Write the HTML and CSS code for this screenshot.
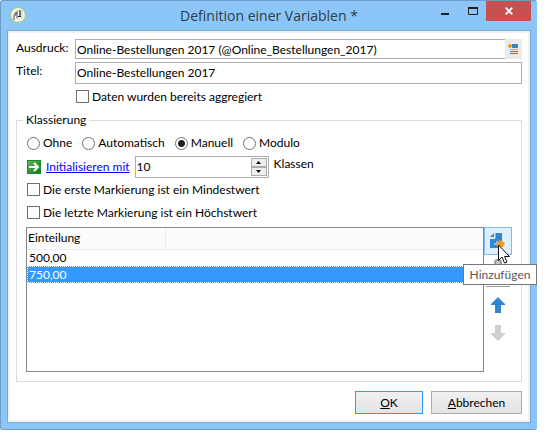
FILE: index.html
```html
<!DOCTYPE html>
<html lang="de">
<head>
<meta charset="utf-8">
<title>Definition einer Variablen</title>
<link rel="stylesheet" href="styles.css">
</head>
<body>
<main class="window">
  <header class="titlebar">
    <svg class="app-icon" viewBox="0 0 16 16" aria-hidden="true">
      <circle cx="8" cy="8" r="7.4" fill="#f7f7f5" stroke="#a5cf55"/>
      <path d="M3 13V8l2-3 3-2v9l-2-1v-3l-1 1v4z" fill="#a0a0a0"/>
      <path d="M5 7l2-2v2l-2 2z" fill="#666"/>
      <path d="M10 3v6M8 9.500h3" stroke="#222" stroke-width="1.200" fill="none"/>
      <path d="M12 4v8" stroke="#c4c4c4" stroke-width="1"/>
    </svg>
    <h1 class="title">Definition einer Variablen *</h1>
    <div class="window-buttons">
      <button class="win-btn" type="button" aria-label="Minimieren"><svg width="10" height="8" viewBox="0 0 10 8"><path d="M1 7h8" stroke="#1e1e1e" stroke-width="2"/></svg></button>
      <button class="win-btn" type="button" aria-label="Maximieren"><svg width="10" height="8" viewBox="0 0 10 8"><path d="M.5 1v6.500h9V1" stroke="#1e1e1e" fill="none"/><path d="M0 1h10" stroke="#1e1e1e" stroke-width="2"/></svg></button>
      <button class="win-btn close" type="button" aria-label="Schließen"><svg width="8" height="8" viewBox="0 0 8 8"><path d="M.7.7l6.600 6.600M7.300.7L.7 7.300" stroke="#fff" stroke-width="1.800"/></svg></button>
    </div>
  </header>
  <form class="client">
    <div class="fields">
      <label for="expr">Ausdruck:</label>
      <div class="combo">
        <input class="text" id="expr" type="text" value="Online-Bestellungen 2017 (@Online_Bestellungen_2017)">
        <button class="combo-btn" type="button" aria-label="Ausdruck bearbeiten">
          <svg width="11" height="10" viewBox="0 0 11 10"><path d="M4 0h6v4H4z" fill="#2f86d3"/><path d="M2 5.500h8" stroke="#8bb9e3"/><path d="M2 7.500h8M2 9.500h8" stroke="#2f86d3"/><path d="M0 2h4M2 0v4" stroke="#f39a1d" stroke-width="2" fill="none"/></svg>
        </button>
      </div>
      <label for="ttl">Titel:</label>
      <input class="text tall" id="ttl" type="text" value="Online-Bestellungen 2017">
      <label class="option aggregated"><input type="checkbox">Daten wurden bereits aggregiert</label>
    </div>
    <fieldset class="group">
      <legend>Klassierung</legend>
      <div class="radios">
        <label class="option"><input type="radio" name="mode">Ohne</label>
        <label class="option"><input type="radio" name="mode">Automatisch</label>
        <label class="option"><input type="radio" name="mode" checked>Manuell</label>
        <label class="option"><input type="radio" name="mode">Modulo</label>
      </div>
      <div class="init">
        <svg width="14" height="14" viewBox="0 0 14 14" aria-hidden="true"><defs><linearGradient id="g" x2="1" y2="1"><stop stop-color="#62b562"/><stop offset="1" stop-color="#087b15"/></linearGradient></defs><rect x=".5" y=".5" width="13" height="13" fill="url(#g)" stroke="#238629"/><path d="M2 7h9M7 3l4 4-4 4" stroke="#fff" stroke-width="2" fill="none"/></svg>
        <a href="#classes">Initialisieren mit</a>
        <div class="spin">
          <input id="classes" type="text" value="10">
          <div class="spin-btns">
            <button type="button" aria-label="Mehr"><svg width="5" height="3" viewBox="0 0 5 3"><path d="M0 3L2.500 0 5 3z"/></svg></button>
            <button type="button" aria-label="Weniger"><svg width="5" height="3" viewBox="0 0 5 3"><path d="M0 0l2.500 3L5 0z"/></svg></button>
          </div>
        </div>
        <label class="unit" for="classes">Klassen</label>
      </div>
      <label class="option line"><input type="checkbox">Die erste Markierung ist ein Mindestwert</label>
      <label class="option line"><input type="checkbox">Die letzte Markierung ist ein Höchstwert</label>
      <div class="list-area">
        <div class="list">
          <table>
            <thead><tr><th class="first">Einteilung</th><th></th></tr></thead>
            <tbody>
              <tr><td colspan="2">500,00</td></tr>
              <tr class="selected"><td colspan="2">750,00</td></tr>
            </tbody>
          </table>
        </div>
        <div class="tools">
          <button class="tool add" type="button" aria-label="Hinzufügen">
            <svg width="16" height="17" viewBox="0 0 16 17"><path d="M5 0h7v9L8 15H0V6h5z" fill="#2f86d3"/><path d="M0 4l4-4v4z" fill="#2f86d3"/><path d="M5 0v5H0M4 11h3V8" stroke="#deefff" fill="none"/><path d="M9 7l1 1 2-1 1 2 2 1-1 2-1 2H8l-2-2 1-2 1-1z" fill="#f39a1d"/></svg>
          </button>
          <button class="tool edit" type="button" aria-label="Bearbeiten"><svg width="12" height="14" viewBox="0 0 12 14"><circle cx="6" cy="6" r="3" fill="#ccc" stroke="#999" stroke-width="2"/></svg></button>
          <button class="tool" type="button" aria-label="Nach oben"><svg width="14" height="16" viewBox="0 0 14 16"><path d="M7 0l7 7v1h-4v8H4V8H0V7z" fill="#2f86d3"/></svg></button>
          <button class="tool" type="button" aria-label="Nach unten" disabled><svg width="14" height="16" viewBox="0 0 14 16"><path d="M7 16l7-7V8h-4V0H4v8H0v1z" fill="#cfcfcf"/></svg></button>
          <div class="tooltip" role="tooltip">Hinzufügen</div>
          <svg class="cursor" width="13" height="20" viewBox="0 0 13 20" aria-hidden="true"><path d="M.5 1v15.500l3.500-3.500 2.500 6 2.500-1-2.500-5.500h5z" fill="#fff" stroke="#111"/></svg>
        </div>
      </div>
    </fieldset>
    <div class="actions">
      <button class="btn primary" type="button"><u>O</u>K</button>
      <button class="btn" type="button"><u>A</u>bbrechen</button>
    </div>
  </form>
</main>
</body>
</html>
```
FILE: styles.css
```css
* { box-sizing: border-box; }
body {
  margin: 0;
  padding-right: 19px;
  background: #fff;
  color: #000;
  font: 12px/16px Lato, "Open Sans", sans-serif;
}
button, input { font: inherit; color: inherit; margin: 0; padding: 0; }
button { display: flex; align-items: center; justify-content: center; border: 0; background: none; }
svg { display: block; flex: none; }

.window {
  background: #8cc6f9;
  border: 1px solid #6c9dc7;
  border-right: 0;
  border-radius: 3px;
  padding: 0 6px 6px;
}
.titlebar { display: grid; grid-template-columns: 100px 1fr 100px; height: 29px; }
.app-icon { width: 16px; height: 16px; margin: 6px 0 0 3px; }
.title {
  margin: 0;
  font-family: "Open Sans", sans-serif;
  font-size: 14px;
  line-height: 29px;
  font-weight: 400;
  text-align: center;
  white-space: nowrap;
  color: #2d3b47;
}
.window-buttons { display: flex; justify-content: flex-end; }
.win-btn { width: 28px; height: 20px; }
.win-btn.close { width: 45px; background: #c75050; }

.client {
  background: #fff;
  border: 1px solid #78a9d5;
  box-shadow: inset 0 0 0 2px #f2f2f2;
  padding: 8px;
}
.fields {
  display: grid;
  grid-template-columns: 59px 1fr;
  grid-template-rows: 20px 22px 13px;
  row-gap: 3px;
  line-height: 18px;
}
.text {
  width: 100%;
  height: 20px;
  padding: 0 1px;
  border: 1px solid #abadb3;
  background: #fff;
}
.text.tall { height: 22px; padding-bottom: 2px; }
.combo { display: flex; }
.combo .text { border-right: 0; }
.combo-btn { flex: none; width: 17px; background: #ebebeb; }

.option { display: flex; align-items: center; gap: 3px; white-space: nowrap; }
.option input {
  appearance: none;
  flex: none;
  width: 13px;
  height: 13px;
  border: 1px solid #707070;
  background: #fff;
}
.option input[type="radio"] { border-radius: 50%; }
.option input[type="radio"]:checked { background: radial-gradient(circle, #202020 3px, #fff 4px); }
.aggregated { grid-column: 2; margin: 3px 0 0 1px; height: 13px; }

.group {
  min-width: 0;
  margin: 12px 0 0;
  padding: 6px 9px 9px;
  border: 1px solid #dcdcdc;
}
legend { margin-left: -3px; padding: 0 3px; }
.radios { display: flex; gap: 10px; height: 18px; padding-left: 1px; }
.init { display: flex; align-items: center; gap: 5px; height: 22px; margin-top: 4px; padding-left: 1px; }
.init a { color: #00f; white-space: nowrap; }
.spin {
  display: flex;
  width: 134px;
  height: 22px;
  padding: 1px;
  border: 1px solid #abadb3;
  background: #fff;
}
.spin input { flex: 1; min-width: 0; border: 0; background: none; }
.spin-btns { display: grid; width: 16px; }
.spin-btns button { border: 1px solid #acacac; background: #eee; }
.unit { align-self: flex-start; line-height: 16px; }
.line { height: 23px; padding-left: 1px; }
.list-area { display: flex; margin-top: 3px; }
.list { flex: 1; height: 145px; border: 1px solid #828790; }
.list table { width: 100%; border-collapse: collapse; }
.list th {
  height: 21px;
  padding: 0 1px;
  text-align: left;
  font-weight: 400;
  background: #fcfcfc;
  border-bottom: 1px solid #e5edfb;
}
.list .first { width: 138px; border-right: 1px solid #e5edfb; }
.list td { height: 17px; padding: 0 2px; line-height: 16px; }
.list .selected td { background: #3399ff; color: #fff; outline: 1px dotted #fff; outline-offset: -1px; }
.tools { position: relative; flex: none; width: 28px; }
.tool { width: 28px; height: 28px; }
.tool.add { border: 1px solid #84b9ee; background: #deefff; }
.tool.edit { width: 24px; height: 30px; margin: 2px 2px 4px; align-items: flex-start; border-bottom: 1px solid #999; }
.tooltip {
  position: absolute;
  top: 37px;
  right: -25px;
  width: 74px;
  height: 21px;
  border: 1px solid #767676;
  background: #fff;
  color: #575757;
  text-align: center;
  line-height: 19px;
}
.cursor { position: absolute; left: 14px; top: 17px; }

.actions { display: flex; justify-content: flex-end; gap: 8px; margin-top: 9px; }
.btn { display: block; width: 91px; height: 23px; border: 1px solid #acacac; background: linear-gradient(#f0f0f0, #e4e4e4); }
.btn.primary { width: 68px; border-color: #3399ff; }
```
